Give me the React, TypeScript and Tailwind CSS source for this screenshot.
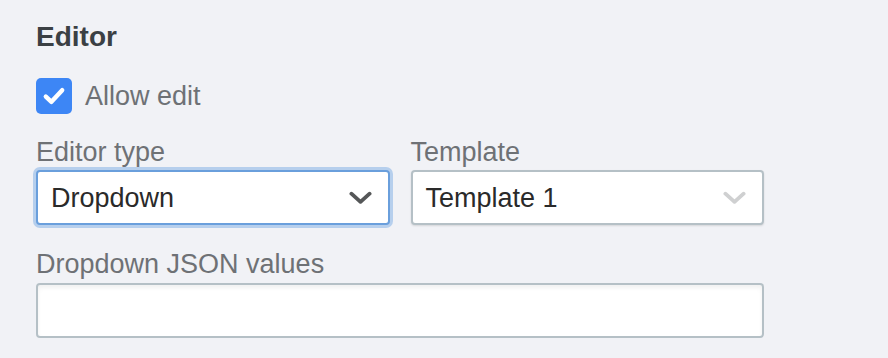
import React from 'react';

const Chevron: React.FC<{ className?: string }> = ({ className }) => (
  <svg viewBox="0 0 24 14" className={className} fill="none" stroke="currentColor" strokeWidth={4} strokeLinecap="round" strokeLinejoin="round">
    <path d="M2.5 2.5 L12 11 L21.5 2.5" />
  </svg>
);

const App: React.FC = () => {
  return (
    <div className="w-[888px] h-[358px] bg-[#f1f2f6] font-['Liberation_Sans',Arial,sans-serif] text-[27px] leading-[32px] px-[36px] pt-[21px]">
      {/* Section title */}
      <h2 className="font-bold text-[28px] text-[#3b4044]">Editor</h2>

      {/* Allow edit checkbox */}
      <label className="flex items-center gap-[13px] mt-[25px] h-[36px] text-[#6e7175]">
        <span className="w-[36px] h-[36px] rounded-[5px] bg-[#3d86f5] flex items-center justify-center">
          <svg viewBox="0 0 24 24" className="w-[28px] h-[28px]" fill="none" stroke="white" strokeWidth={3.8} strokeLinecap="round" strokeLinejoin="round">
            <path d="M5 12.5 L9.8 17 L19 7" />
          </svg>
        </span>
        Allow edit
      </label>

      {/* Editor type / Template */}
      <div className="flex gap-[21px] mt-[22px] w-[728px]">
        <div className="flex-1 flex flex-col">
          <span className="text-[#6e7175]">Editor type</span>
          <div className="mt-[2px] h-[55px] bg-white rounded-[4px] border-2 border-[#6a9fdc] ring-[3px] ring-[#b6cfed] flex items-center justify-between pl-[13px] pr-[16px] text-[#2a2a2a]">
            <span>Dropdown</span>
            <Chevron className="w-[23px] h-[14px] text-[#555758]" />
          </div>
        </div>
        <div className="flex-1 flex flex-col">
          <span className="text-[#6e7175]">Template</span>
          <div className="mt-[2px] h-[55px] bg-white rounded-[4px] border-2 border-[#b5c0c6] shadow-[0_1px_2px_rgba(0,0,0,0.12)] flex items-center justify-between pl-[13px] pr-[16px] text-[#2a2a2a]">
            <span>Template 1</span>
            <Chevron className="w-[23px] h-[14px] text-[#cfd0d1]" />
          </div>
        </div>
      </div>

      {/* JSON values */}
      <div className="flex flex-col mt-[23px] w-[728px]">
        <span className="text-[#6e7175]">Dropdown JSON values</span>
        <div className="mt-[3px] h-[55px] bg-white rounded-[4px] border-2 border-[#b5c0c6] shadow-[inset_0_3px_4px_rgba(0,0,0,0.06)]" />
      </div>
    </div>
  );
};

export default App;
